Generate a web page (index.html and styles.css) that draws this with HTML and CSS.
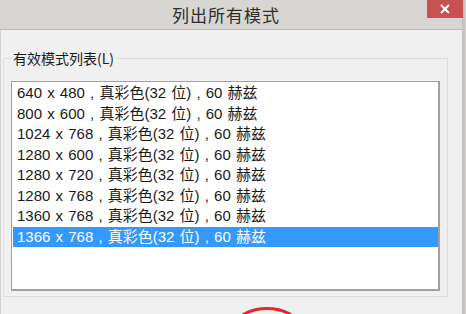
FILE: index.html
```html
<!DOCTYPE html>
<html lang="zh-CN">
<head>
    <meta charset="UTF-8">
    <title>列出所有模式</title>
    <link rel="stylesheet" href="styles.css">
</head>
<body>
    <div class="window">
        <div class="titlebar">
            <div class="title">列出所有模式</div>
            <button class="close" aria-label="关闭">
                <svg width="10" height="10" viewBox="0 0 10 10">
                    <path d="M1 1 L9 9 M9 1 L1 9" stroke="#fff" stroke-width="2" fill="none"/>
                </svg>
            </button>
        </div>
        <div class="client">
            <fieldset class="group">
                <legend>有效模式列表(L)</legend>
                <ul class="listbox" id="modes"></ul>
            </fieldset>
            <div class="mark"></div>
        </div>
    </div>

    <script>
        const modes = [
            '640 x 480', '800 x 600', '1024 x 768', '1280 x 600',
            '1280 x 720', '1280 x 768', '1360 x 768', '1366 x 768'
        ];
        const list = document.getElementById('modes');
        modes.forEach((size, index) => {
            const item = document.createElement('li');
            item.className = 'mode';
            if (index === modes.length - 1) item.classList.add('selected');
            item.textContent = `${size} , 真彩色(32 位) , 60 赫兹`;
            list.appendChild(item);
        });
    </script>
</body>
</html>
```

FILE: styles.css
```css
body, html {
    margin: 0;
    padding: 0;
    height: 100%;
    overflow: hidden;
    background: #d8d6d3;
    font-family: "Liberation Sans", "Noto Sans CJK SC", sans-serif;
    color: #1a1a1a;
}
.window {
    width: 462px;
    height: 314px;
    border-right: 3px solid #c6c4c2;
    display: flex;
    flex-direction: column;
}
.titlebar {
    height: 29px;
    position: relative;
    display: flex;
    justify-content: center;
    align-items: center;
    border-bottom: 1px solid #bdbbb8;
}
.title {
    font-family: "Noto Sans CJK SC", sans-serif;
    font-size: 17px;
    color: #2e2e2e;
    margin-left: -10px;
    letter-spacing: 1px;
}
.close {
    position: absolute;
    top: 0;
    right: -1px;
    width: 36px;
    height: 18px;
    border: none;
    padding: 0;
    background: #c75050;
    display: flex;
    justify-content: center;
    align-items: center;
}
.client {
    flex: 1;
    background: #f0f0f0;
    border-left: 1px solid #d2d2d2;
    position: relative;
    overflow: hidden;
}
.group {
    margin: 20px 0 0 2px;
    width: 429px;
    padding: 0 7px 5px;
    border: 1px solid #dcdcdc;
}
.group legend {
    padding: 0 2px;
    font-family: "Noto Sans CJK SC", sans-serif;
    font-size: 14px;
    line-height: 16px;
    color: #1a1a1a;
}
.listbox {
    list-style: none;
    margin: 15px 0 0;
    padding: 1px 0 0 1px;
    height: 206px;
    background: #fff;
    border: 1px solid #a0a0a0;
    border-bottom-width: 2px;
    border-right-width: 2px;
}
.mode {
    height: 20.5px;
    line-height: 20.5px;
    padding-left: 4px;
    font-size: 15px;
    word-spacing: 1px;
    white-space: nowrap;
}
.mode.selected {
    background: #3399ff;
    color: #fff;
}
.mark {
    position: absolute;
    left: 234px;
    top: 277px;
    width: 58px;
    height: 30px;
    border: 3px solid #e8262a;
    border-radius: 50%;
}
```
